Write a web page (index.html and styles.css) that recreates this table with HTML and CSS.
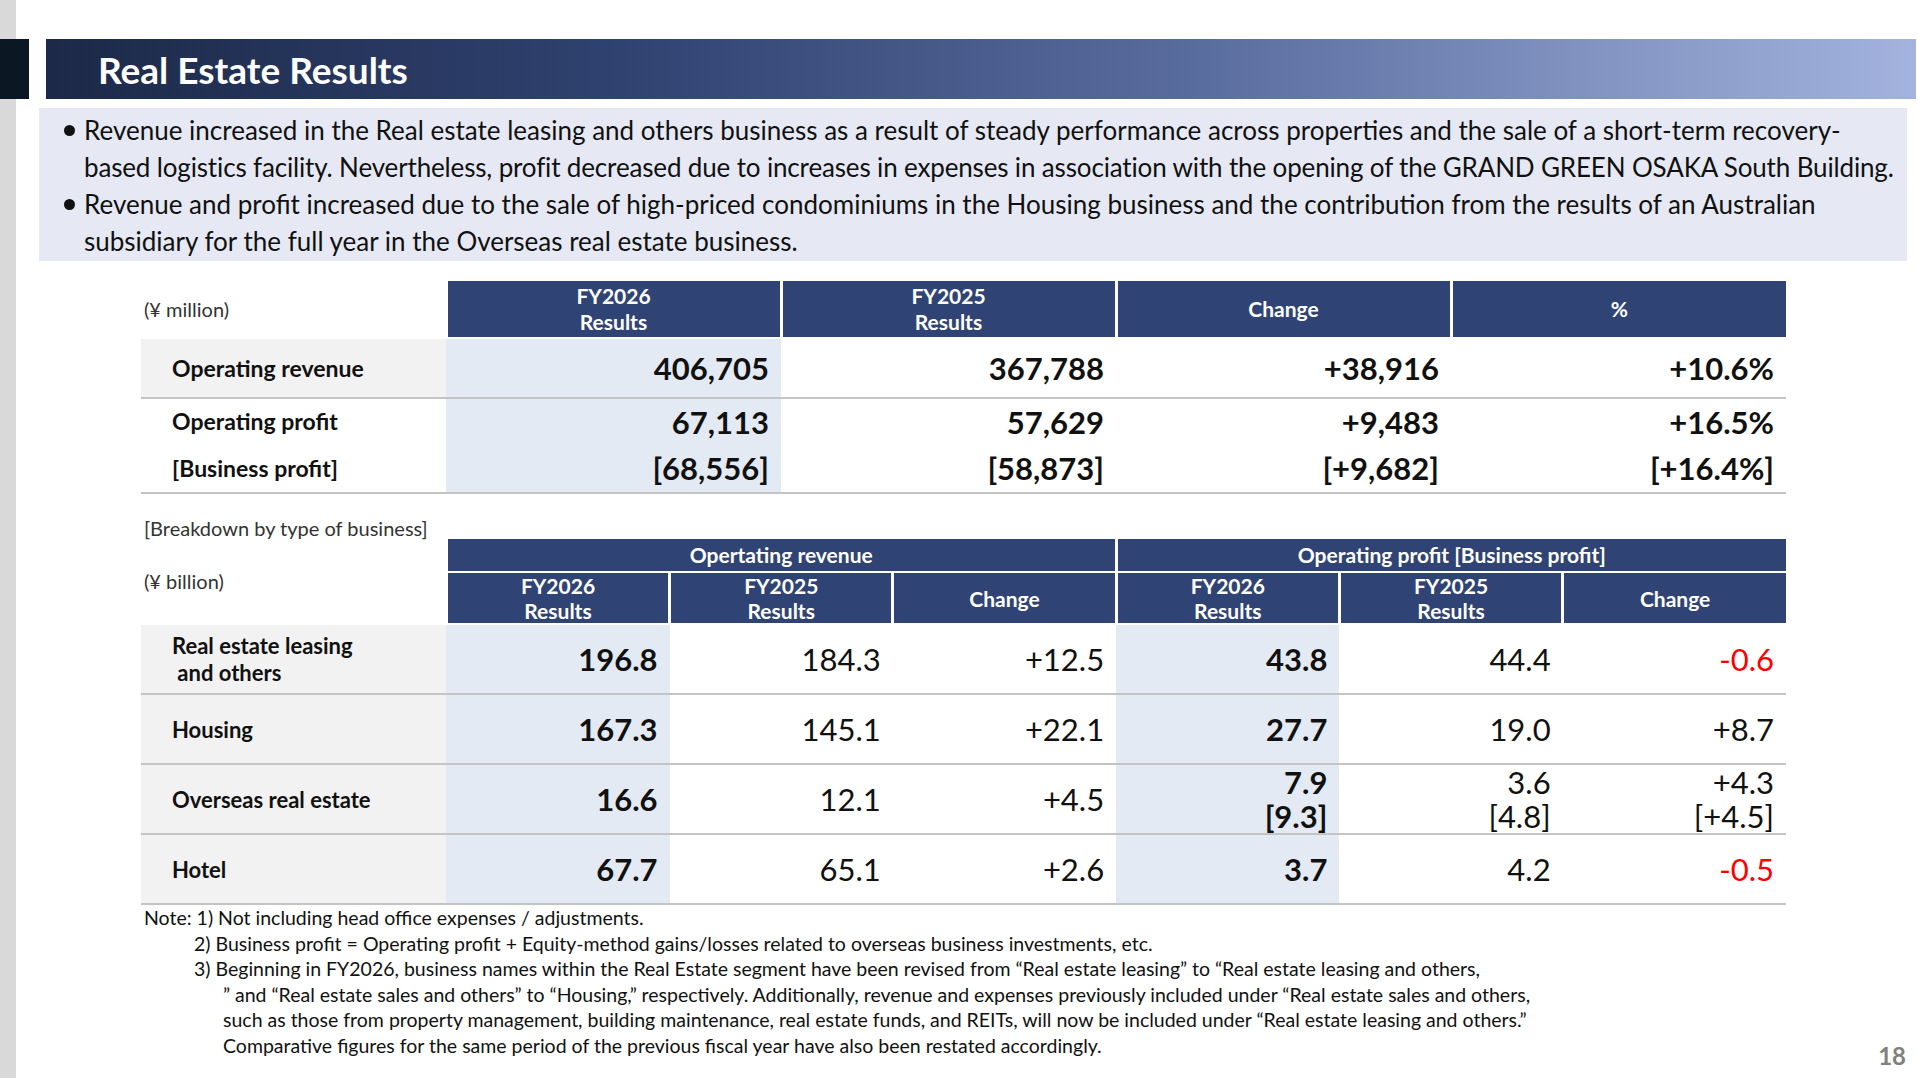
FILE: index.html
```html
<!DOCTYPE html>
<html lang="en">
<head>
    <meta charset="UTF-8">
    <title>Real Estate Results</title>
    <link rel="stylesheet" href="styles.css">
</head>
<body>
    <div class="slide">
        <header class="title-row">
            <div class="title-mark"></div>
            <h1 class="title-bar">Real Estate Results</h1>
        </header>

        <ul class="summary">
            <li>Revenue increased in the Real estate leasing and others business as a result of steady performance across properties and the sale of a short-term recovery-<br><span class="tight">based logistics facility. Nevertheless, profit decreased due to increases in expenses in association with the opening of the GRAND GREEN OSAKA South Building.</span></li>
            <li>Revenue and profit increased due to the sale of high-priced condominiums in the Housing business and the contribution from the results of an Australian<br>subsidiary for the full year in the Overseas real estate business.</li>
        </ul>

        <div class="content">
            <table class="results">
                <colgroup>
                    <col class="col-label">
                    <col class="col-wide">
                    <col class="col-wide">
                    <col class="col-wide">
                    <col class="col-wide">
                </colgroup>
                <thead>
                    <tr>
                        <th class="unit">(¥ million)</th>
                        <th>FY2026<br>Results</th>
                        <th>FY2025<br>Results</th>
                        <th>Change</th>
                        <th>%</th>
                    </tr>
                </thead>
                <tbody>
                    <tr class="row-main sep">
                        <td class="label shaded">Operating revenue</td>
                        <td class="cur">406,705</td>
                        <td>367,788</td>
                        <td>+38,916</td>
                        <td>+10.6%</td>
                    </tr>
                    <tr class="row-sub">
                        <td class="label">Operating profit</td>
                        <td class="cur">67,113</td>
                        <td>57,629</td>
                        <td>+9,483</td>
                        <td>+16.5%</td>
                    </tr>
                    <tr class="row-sub row-last sep">
                        <td class="label">[Business profit]</td>
                        <td class="cur">[68,556]</td>
                        <td>[58,873]</td>
                        <td>[+9,682]</td>
                        <td>[+16.4%]</td>
                    </tr>
                </tbody>
            </table>

            <p class="caption">[Breakdown by type of business]</p>

            <table class="breakdown">
                <colgroup>
                    <col class="col-label">
                    <col class="col-narrow">
                    <col class="col-narrow">
                    <col class="col-narrow">
                    <col class="col-narrow">
                    <col class="col-narrow">
                    <col class="col-narrow">
                </colgroup>
                <thead>
                    <tr class="group-row">
                        <th class="unit" rowspan="2">(¥ billion)</th>
                        <th colspan="3">Opertating revenue</th>
                        <th colspan="3">Operating profit [Business profit]</th>
                    </tr>
                    <tr class="sub-row">
                        <th>FY2026<br>Results</th>
                        <th>FY2025<br>Results</th>
                        <th>Change</th>
                        <th>FY2026<br>Results</th>
                        <th>FY2025<br>Results</th>
                        <th>Change</th>
                    </tr>
                </thead>
                <tbody>
                    <tr class="sep">
                        <td class="label shaded">Real estate leasing<br>&nbsp;and others</td>
                        <td class="cur">196.8</td>
                        <td>184.3</td>
                        <td>+12.5</td>
                        <td class="cur">43.8</td>
                        <td>44.4</td>
                        <td class="neg">-0.6</td>
                    </tr>
                    <tr class="sep">
                        <td class="label shaded">Housing</td>
                        <td class="cur">167.3</td>
                        <td>145.1</td>
                        <td>+22.1</td>
                        <td class="cur">27.7</td>
                        <td>19.0</td>
                        <td>+8.7</td>
                    </tr>
                    <tr class="sep">
                        <td class="label shaded">Overseas real estate</td>
                        <td class="cur">16.6</td>
                        <td>12.1</td>
                        <td>+4.5</td>
                        <td class="cur stacked">7.9<br>[9.3]</td>
                        <td class="stacked">3.6<br>[4.8]</td>
                        <td class="stacked">+4.3<br>[+4.5]</td>
                    </tr>
                    <tr class="sep">
                        <td class="label shaded">Hotel</td>
                        <td class="cur">67.7</td>
                        <td>65.1</td>
                        <td>+2.6</td>
                        <td class="cur">3.7</td>
                        <td>4.2</td>
                        <td class="neg">-0.5</td>
                    </tr>
                </tbody>
            </table>

            <footer class="notes-row">
                <div class="notes">
                    <p>Note: 1) Not including head office expenses / adjustments.</p>
                    <p class="note-item">2) Business profit = Operating profit + Equity-method gains/losses related to overseas business investments, etc.</p>
                    <p class="note-item">3) Beginning in FY2026, business names within the Real Estate segment have been revised from “Real estate leasing” to “Real estate leasing and others,</p>
                    <p class="note-cont">” and “Real estate sales and others” to “Housing,” respectively. Additionally, revenue and expenses previously included under “Real estate sales and others,</p>
                    <p class="note-cont">such as those from property management, building maintenance, real estate funds, and REITs, will now be included under “Real estate leasing and others.”</p>
                    <p class="note-cont">Comparative figures for the same period of the previous fiscal year have also been restated accordingly.</p>
                </div>
                <div class="page-no">18</div>
            </footer>
        </div>
    </div>
</body>
</html>
```

FILE: styles.css
```css
* {
    box-sizing: border-box;
}
body {
    margin: 0;
    font-family: Lato, "Open Sans", "Liberation Sans", sans-serif;
    color: #111;
    background: linear-gradient(to right, #d9d9d9 16px, #fff 16px);
}
.slide {
    width: 1918px;
    height: 1078px;
    padding-top: 39px;
    overflow: hidden;
}

/* title */
.title-row {
    display: flex;
    height: 60px;
}
.title-mark {
    width: 29px;
    background-color: #0b1722;
}
.title-bar {
    flex: 1;
    margin: 0 2px 0 17px;
    padding-left: 52px;
    display: flex;
    align-items: center;
    font-size: 37px;
    font-weight: 700;
    color: #fff;
    background: linear-gradient(to right, #1c2948 0%, #2f416f 30%, #5a6d9f 62%, #a3b3de 100%);
}

/* summary bullets */
.summary {
    list-style: none;
    margin: 9px 11px 0 39px;
    padding: 4px 0 1px 45px;
    background-color: #e6e9f4;
    font-size: 26px;
    line-height: 37px;
    color: #111;
}
.summary li {
    white-space: nowrap;
}
.summary li::before {
    content: "";
    display: inline-block;
    width: 11px;
    height: 11px;
    margin-left: -20px;
    margin-right: 9px;
    border-radius: 50%;
    background-color: #111;
    vertical-align: 4px;
}
.summary .tight {
    letter-spacing: -0.15px;
}

/* tables */
.content {
    padding: 20px 12px 0 141px;
}
table {
    border-collapse: collapse;
    table-layout: fixed;
    width: 1645px;
}
.col-label {
    width: 305px;
}
.col-wide {
    width: 335px;
}
.col-narrow {
    width: 223px;
}
th {
    background-color: #2f4474;
    color: #fff;
    font-size: 21px;
    font-weight: 700;
    line-height: 26px;
    text-align: center;
    border-left: 3px solid #fff;
    border-bottom: 2px solid #fff;
    padding: 0;
}
th.unit {
    background-color: #fff;
    color: #333;
    font-weight: 400;
    font-size: 20px;
    text-align: left;
    padding-left: 3px;
    border-left: none;
}
td {
    padding: 0 12px 0 0;
    text-align: right;
    font-size: 31px;
    font-weight: 400;
    white-space: nowrap;
}
td.label {
    text-align: left;
    padding-left: 31px;
    font-size: 22px;
    font-weight: 700;
    line-height: 27px;
}
td.shaded {
    background-color: #f2f2f2;
}
td.cur {
    background-color: #e4eaf4;
    font-weight: 700;
}
td.neg {
    color: #ff0000;
}
tr.sep td {
    border-bottom: 2px solid #c4c4c4;
}

.results thead th {
    height: 57px;
}
.results td {
    font-weight: 700;
}
.results td.label {
    font-size: 23px;
}
.results .row-main td {
    height: 60px;
}
.results .row-sub td {
    height: 46px;
}
.results .row-last td {
    height: 49px;
}

.caption {
    margin: 23px 0 0 3px;
    font-size: 20px;
    line-height: 22px;
    color: #333;
}

.breakdown .group-row th {
    height: 33px;
}
.breakdown .sub-row th {
    height: 50px;
    line-height: 25px;
}
.breakdown td {
    height: 70px;
}
td.stacked {
    line-height: 34px;
}

/* notes */
.notes-row {
    display: flex;
    justify-content: space-between;
    align-items: flex-end;
}
.notes {
    padding-left: 3px;
    font-size: 19.5px;
    line-height: 25.5px;
    color: #111;
}
.notes p {
    margin: 0;
}
.notes .note-item {
    padding-left: 50px;
}
.notes .note-cont {
    padding-left: 79px;
}
.page-no {
    margin-bottom: -10px;
    font-size: 24px;
    font-weight: 700;
    color: #808080;
    line-height: 25px;
}
```
